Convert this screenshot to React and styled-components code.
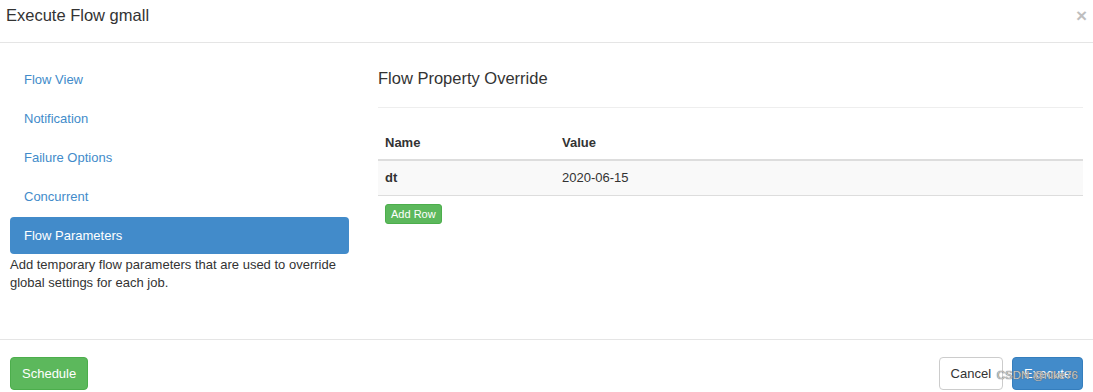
import React from "react";
import styled, { createGlobalStyle } from "styled-components";

const GlobalStyle = createGlobalStyle`
  html, body {
    margin: 0;
    padding: 0;
    background: #fff;
  }
  body {
    font-family: "Liberation Sans", Arial, sans-serif;
    font-size: 13px;
    color: #333;
  }
  * { box-sizing: border-box; }
`;

const navItems = ["Flow View", "Notification", "Failure Options", "Concurrent", "Flow Parameters"];

export default function App() {
  return (
    <Modal>
      <GlobalStyle />
      <Header>
        <Title>Execute Flow gmall</Title>
        <Close>×</Close>
      </Header>
      <Body>
        <Sidebar>
          <Nav>
            {navItems.map((item) => (
              <NavItem key={item} active={item === "Flow Parameters"}>
                {item}
              </NavItem>
            ))}
          </Nav>
          <Help>
            Add temporary flow parameters that are used to override global settings for each job.
          </Help>
        </Sidebar>
        <Panel>
          <PanelTitle>Flow Property Override</PanelTitle>
          <Table>
            <thead>
              <tr>
                <Th style={{ width: 177 }}>Name</Th>
                <Th>Value</Th>
              </tr>
            </thead>
            <tbody>
              <Row>
                <Td bold>dt</Td>
                <Td>2020-06-15</Td>
              </Row>
            </tbody>
          </Table>
          <SmallButton>Add Row</SmallButton>
        </Panel>
      </Body>
      <Footer>
        <Button variant="success">Schedule</Button>
        <FooterRight>
          <Button>Cancel</Button>
          <Button variant="primary">Execute</Button>
        </FooterRight>
        <Watermark>CSDN @nike76</Watermark>
      </Footer>
    </Modal>
  );
}

const Modal = styled.div`
  width: 1093px;
  height: 392px;
  overflow: hidden;
  display: flex;
  flex-direction: column;
`;

const Header = styled.div`
  height: 43px;
  border-bottom: 1px solid #e5e5e5;
  padding: 5px 6px 0 6px;
  display: flex;
  justify-content: space-between;
  align-items: flex-start;
`;

const Title = styled.h4`
  margin: 0;
  font-size: 16.5px;
  line-height: 20px;
  font-weight: normal;
  color: #333;
`;

const Close = styled.span`
  font-size: 19px;
  font-weight: bold;
  line-height: 1;
  color: #000;
  opacity: 0.25;
  margin-top: 1px;
`;

const Body = styled.div`
  height: 296px;
  padding: 18px 10px 0 10px;
  display: grid;
  grid-template-columns: 339px 1fr;
  column-gap: 29px;
`;

const Sidebar = styled.div`
  display: flex;
  flex-direction: column;
`;

const Nav = styled.ul`
  list-style: none;
  margin: 0;
  padding: 0;
  display: flex;
  flex-direction: column;
  gap: 2px;
`;

const NavItem = styled.li`
  height: 37px;
  line-height: 37px;
  padding: 0 14px;
  border-radius: 4px;
  font-size: 13px;
  color: ${(p) => (p.active ? "#fff" : "#428bca")};
  background: ${(p) => (p.active ? "#428bca" : "transparent")};
`;

const Help = styled.p`
  margin: 2px 0 0;
  font-size: 13px;
  line-height: 18px;
  color: #333;
`;

const Panel = styled.div`
  display: flex;
  flex-direction: column;
  align-items: flex-start;
`;

const PanelTitle = styled.h4`
  align-self: stretch;
  margin: 7px 0 0;
  padding-bottom: 19px;
  border-bottom: 1px solid #eee;
  font-size: 16.5px;
  line-height: 20px;
  font-weight: normal;
  color: #333;
`;

const Table = styled.table`
  width: 100%;
  margin-top: 17px;
  border-collapse: collapse;
  font-size: 13px;
`;

const Th = styled.th`
  text-align: left;
  height: 35px;
  padding: 0 7px;
  font-weight: bold;
  border-bottom: 2px solid #ddd;
  vertical-align: middle;
`;

const Row = styled.tr`
  background: #f9f9f9;
`;

const Td = styled.td`
  height: 35px;
  padding: 0 7px;
  border-bottom: 1px solid #ddd;
  font-weight: ${(p) => (p.bold ? "bold" : "normal")};
  vertical-align: middle;
`;

const SmallButton = styled.button`
  margin: 8px 0 0 7px;
  height: 20px;
  padding: 0 5px;
  font-family: inherit;
  font-size: 11px;
  line-height: 18px;
  color: #fff;
  background: #5cb85c;
  border: 1px solid #4cae4c;
  border-radius: 3px;
`;

const Footer = styled.div`
  position: relative;
  flex: 1;
  border-top: 1px solid #e5e5e5;
  padding: 17px 10px 0 10px;
  display: flex;
  justify-content: space-between;
  align-items: flex-start;
`;

const FooterRight = styled.div`
  display: flex;
  gap: 9px;
`;

const variants = {
  success: { bg: "#5cb85c", border: "#4cae4c", color: "#fff" },
  primary: { bg: "#428bca", border: "#357ebd", color: "#fff" },
  default: { bg: "#fff", border: "#ccc", color: "#333" },
};

const Button = styled.button`
  height: 33px;
  padding: 0 11px;
  font-family: inherit;
  font-size: 13px;
  line-height: 31px;
  border-radius: 4px;
  border: 1px solid ${(p) => variants[p.variant || "default"].border};
  background: ${(p) => variants[p.variant || "default"].bg};
  color: ${(p) => variants[p.variant || "default"].color};
`;

const Watermark = styled.span`
  position: absolute;
  right: 15px;
  top: 29px;
  font-size: 11.5px;
  color: rgba(220, 220, 220, 0.85);
  text-shadow: 0 0 1px #666, 0 0 1px #666;
  pointer-events: none;
`;
